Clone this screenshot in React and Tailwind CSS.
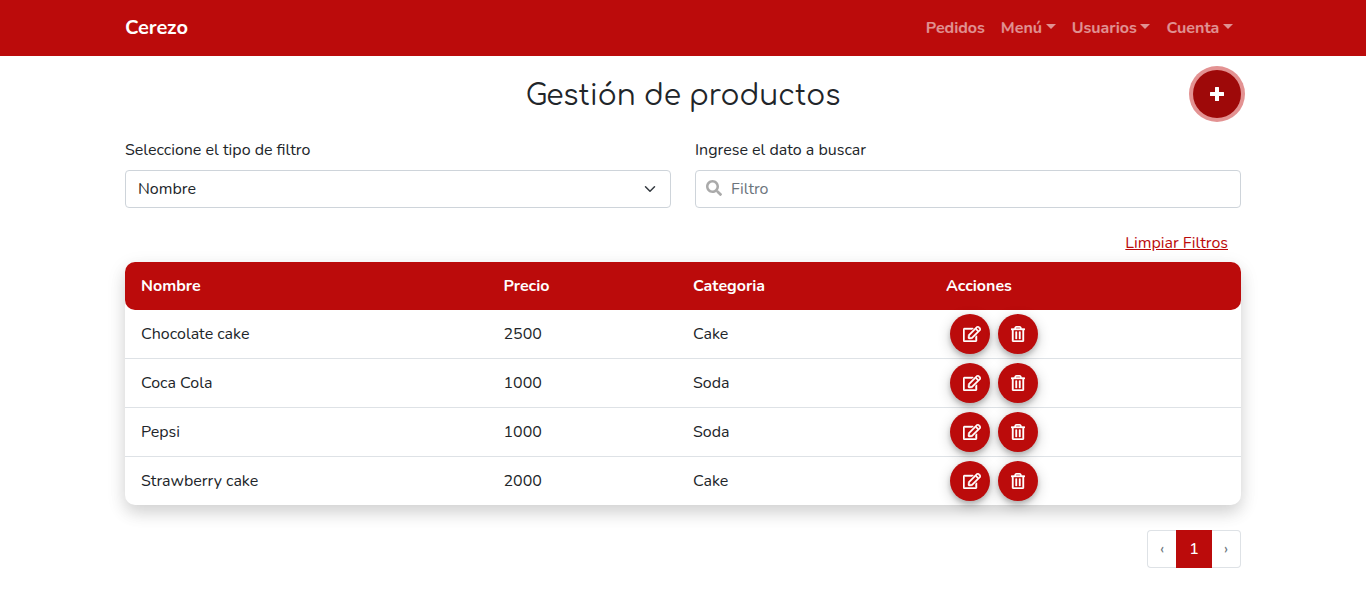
import { FaSearch, FaRegEdit, FaRegTrashAlt } from "react-icons/fa";

const products = [
  { name: "Chocolate cake", price: 2500, category: "Cake" },
  { name: "Coca Cola", price: 1000, category: "Soda" },
  { name: "Pepsi", price: 1000, category: "Soda" },
  { name: "Strawberry cake", price: 2000, category: "Cake" },
];

function NavItem({ label, caret }) {
  return (
    <a href="#" className="flex items-center px-2 font-bold text-white/55">
      {label}
      {caret && (
        <span className="mb-[3px] ml-[3.7px] border-x-5 border-t-5 border-x-transparent border-t-white/55" />
      )}
    </a>
  );
}

function RoundButton({ label, children }) {
  return (
    <button
      aria-label={label}
      className="flex size-10 items-center justify-center rounded-full bg-[#bb0b0b] text-base text-white shadow-[0_3px_5px_rgba(0,0,0,0.2),0_4px_14px_rgba(0,0,0,0.2)]"
    >
      {children}
    </button>
  );
}

export default function App() {
  return (
    <div className="h-[599px] overflow-hidden bg-white font-['Nunito','Lato',sans-serif] text-base text-[#212529]">
      <nav className="h-14 bg-[#bb0b0b]">
        <div className="mx-auto flex h-full w-[1116px] items-center justify-between">
          <a href="#" className="text-xl font-bold text-white">Cerezo</a>
          <div className="flex">
            <NavItem label="Pedidos" />
            <NavItem label="Menú" caret />
            <NavItem label="Usuarios" caret />
            <NavItem label="Cuenta" caret />
          </div>
        </div>
      </nav>

      <main className="mx-auto w-[1116px]">
        <header className="grid h-[76px] grid-cols-[1fr_auto_1fr] items-center">
          <h1 className="col-start-2 pt-1 font-['Comfortaa','Quicksand','Nunito',sans-serif] text-[28px] font-normal">Gestión de productos</h1>
          <button
            aria-label="Agregar"
            className="flex size-12 items-center justify-center justify-self-end rounded-full bg-[#9e0909] text-white shadow-[0_0_0_4px_#e39292]"
          >
            <svg viewBox="0 0 14 14" className="size-3.5" fill="currentColor">
              <path d="M5 .5Q5 0 5.500 0H8.500Q9 0 9 .5V5H13.500Q14 5 14 5.500V8.500Q14 9 13.500 9H9V13.500Q9 14 8.500 14H5.500Q5 14 5 13.500V9H.5Q0 9 0 8.500V5.500Q0 5 .5 5H5Z" />
            </svg>
          </button>
        </header>

        <section className="grid grid-cols-2 gap-6 pt-1.5">
          <div>
            <label className="mb-2 block h-6 leading-6">Seleccione el tipo de filtro</label>
            <div className="flex h-[38px] items-center justify-between rounded border border-[#ced4da] px-3">
              <span>Nombre</span>
              <svg viewBox="0 0 16 16" className="h-3 w-4" fill="none" stroke="#343a40" strokeWidth="2" strokeLinecap="round" strokeLinejoin="round">
                <path d="m2 5 6 6 6-6" />
              </svg>
            </div>
          </div>
          <div>
            <label className="mb-2 block h-6 leading-6">Ingrese el dato a buscar</label>
            <div className="flex h-[38px] items-center rounded border border-[#ced4da] pl-2.5 text-[#6c757d]">
              <FaSearch className="mr-[9px] mb-0.5 text-[#aaaaaa]" />
              <span>Filtro</span>
            </div>
          </div>
        </section>

        <div className="flex justify-end pt-[23px] pr-[13px] pb-[7px]">
          <a href="#" className="leading-6 text-[#bb0b0b] underline">Limpiar Filtros</a>
        </div>

        <section className="rounded-[10px] bg-white shadow-[0_8px_16px_rgba(0,0,0,0.1),0_6px_20px_rgba(0,0,0,0.1)]">
          <div className="grid h-12 grid-cols-[362.5px_189.5px_253px_1fr] items-center rounded-[10px] bg-[#bb0b0b] font-bold text-white">
            <span className="pl-4">Nombre</span>
            <span className="pl-4">Precio</span>
            <span className="pl-4">Categoria</span>
            <span className="pl-4">Acciones</span>
          </div>
          {products.map((product) => (
            <div
              key={product.name}
              className="grid h-[49px] grid-cols-[362.5px_189.5px_253px_1fr] items-center border-b border-[#dee2e6] last:h-12 last:border-b-0"
            >
              <span className="pl-4">{product.name}</span>
              <span className="pl-4">{product.price}</span>
              <span className="pl-4">{product.category}</span>
              <div className="flex gap-2 pl-5">
                <RoundButton label="Editar"><FaRegEdit stroke="white" strokeWidth="14" className="ml-[3px] h-4 w-[18px]" /></RoundButton>
                <RoundButton label="Eliminar"><FaRegTrashAlt stroke="white" strokeWidth="12" className="h-4 w-3.5" /></RoundButton>
              </div>
            </div>
          ))}
        </section>

        <div className="mt-[25px] flex justify-end">
          <div className="flex h-[38px] text-[#6c757d]">
            <button className="w-[29px] rounded-l border border-r-0 border-[#dee2e6]">‹</button>
            <button className="w-9 bg-[#bb0b0b] font-medium text-white">1</button>
            <button className="w-[29px] rounded-r border border-l-0 border-[#dee2e6]">›</button>
          </div>
        </div>
      </main>
    </div>
  );
}
